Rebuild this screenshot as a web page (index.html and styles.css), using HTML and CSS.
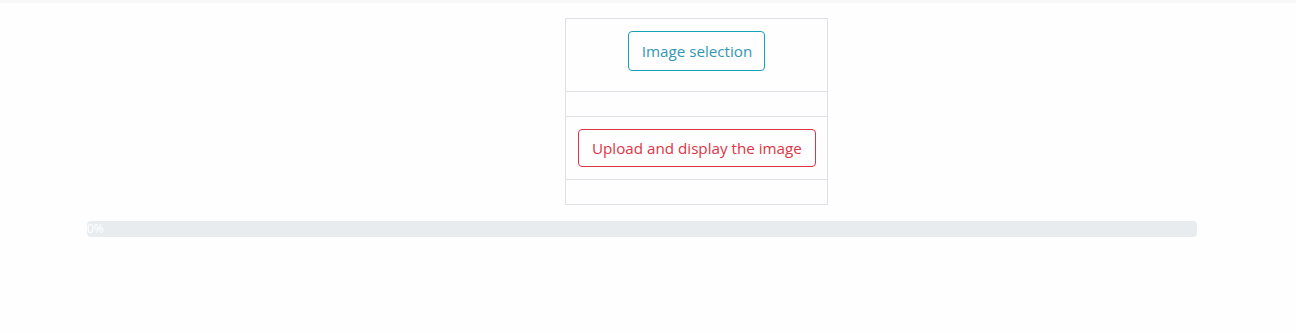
FILE: index.html
```html
<!DOCTYPE html>
<html>
<head>
<meta charset="utf-8">
<link rel="stylesheet" href="styles.css">
</head>
<body>
<div class="topline"></div>
<div class="page">
  <table class="grid">
    <tr><td class="cell first"><button class="btn btn-info">Image selection</button></td></tr>
    <tr><td class="cell"></td></tr>
    <tr><td class="cell"><button class="btn btn-danger">Upload and display the image</button></td></tr>
    <tr><td class="cell"></td></tr>
  </table>
  <div class="progress"><div class="progress-bar">0%</div></div>
</div>
</body>
</html>
```
FILE: styles.css
```css
html, body { margin: 0; padding: 0; }
body {
  background: #fefefe;
  font-family: "Open Sans", "Noto Sans", sans-serif;
  width: 1296px;
  height: 333px;
  overflow: hidden;
}
.topline { height: 3px; background: #f8f8f8; }
.page { padding-top: 15px; }
.grid {
  border-collapse: collapse;
  margin-left: 565px;
  width: 263px;
  table-layout: fixed;
}
.cell {
  border: 1px solid #dee2e6;
  padding: 12px;
  height: 0;
  text-align: center;
  line-height: 0;
  white-space: nowrap;
}
.cell.first { padding-bottom: 20px; }
.btn {
  font-family: inherit;
  font-size: 15.2px;
  line-height: 20px;
  background: transparent;
  border-radius: 4px;
  cursor: pointer;
  vertical-align: top;
  padding-top: 1px;
  white-space: nowrap;
}
.btn-info {
  color: #3297b5;
  border: 1px solid #17a2b8;
  height: 40px;
  padding-left: 13px;
  padding-right: 12px;
}
.btn-danger {
  color: #dc3545;
  border: 1px solid #dc3545;
  height: 38px;
  padding-left: 13px;
  padding-right: 13px;
}
.progress {
  margin-top: 16px;
  margin-left: 87px;
  width: 1110px;
  height: 16px;
  background: #e9ecef;
  border-radius: 4px;
  display: flex;
  overflow: hidden;
}
.progress-bar {
  width: 0;
  color: #fff;
  font-size: 12px;
  line-height: 16px;
  white-space: nowrap;
}
```
